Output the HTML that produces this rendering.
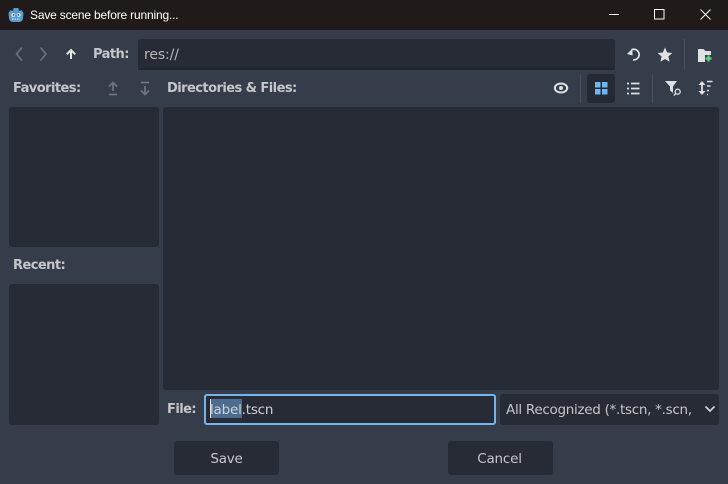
<!DOCTYPE html>
<html><head><meta charset="utf-8">
<style>
html,body{margin:0;padding:0;width:728px;height:484px;overflow:hidden;background:#363d4a}
body{position:relative;font-family:"DejaVu Sans","Liberation Sans",sans-serif;font-size:13px;color:#cdcfd2}
.a{position:absolute}
.p{position:absolute;background:#272b36;border-radius:3px}
.t{position:absolute;white-space:nowrap;line-height:18px;height:18px}
.b{font-weight:bold;color:#c4c6ca;font-size:13px;letter-spacing:-.55px}
svg{position:absolute;overflow:visible}
</style></head><body>
<div class="a" style="left:0;top:0;width:728px;height:30px;background:#201a1b"></div>
<svg style="left:8px;top:7px" width="16" height="16" viewBox="0 0 16 16"><path d="M.5 6 L2.500 3 L5 4 L5.500 1 L10.500 1 L11 4 L13.500 3 L15.500 6 L15 11 Q14.500 15 11 15 L5 15 Q1.500 15 1 11 Z" fill="#5b9bd0"/><circle cx="5.300" cy="8" r="1.900" fill="#e8f0f6"/><circle cx="10.700" cy="8" r="1.900" fill="#e8f0f6"/><circle cx="5.600" cy="8" r=".9" fill="#2c3a48"/><circle cx="10.400" cy="8" r=".9" fill="#2c3a48"/><path d="M4 12h8" stroke="#e8f0f6" stroke-width="1" stroke-dasharray="1.500 1"/></svg>
<div class="t" style="left:30px;top:6px;color:#fff;font-family:'Liberation Sans',sans-serif;font-size:12px;letter-spacing:-.18px">Save scene before running...</div>
<svg style="left:609px;top:9px" width="12" height="12"><path d="M0 5.500h10" stroke="#fff" stroke-width="1"/></svg>
<svg style="left:654px;top:9px" width="12" height="12"><rect x=".5" y=".5" width="9.500" height="9.500" fill="none" stroke="#fff" stroke-width="1"/></svg>
<svg style="left:700px;top:9px" width="12" height="12"><path d="M.5 .5L10.500 10.500M10.500 .5L.5 10.500" stroke="#fff" stroke-width="1"/></svg>

<svg style="left:0;top:0" width="60" height="70"><path d="M22 47.500L16.500 54L22 60.500M40.500 47.500L46 54L40.500 60.500" fill="none" stroke="#6d727b" stroke-width="1.600"/></svg>
<svg style="left:65px;top:48px" width="12" height="12"><path d="M6 11V2.500M1.800 6.300L6 2L10.200 6.300" fill="none" stroke="#e4e5e7" stroke-width="2"/></svg>
<div class="t b" style="left:93px;top:46px">Path:</div>
<div class="p" style="left:138px;top:39px;width:477px;height:31px"></div>
<div class="a" style="left:138px;top:68px;width:477px;height:2px;background:#20252e;border-radius:0 0 3px 3px"></div>
<div class="t" style="left:144px;top:46px;color:#b4b6ba;font-size:14px;letter-spacing:-.1px">res://</div>

<svg style="left:626px;top:47px" width="16" height="15" viewBox="0 0 16 15"><path d="M5.500 2.800A5.300 5.300 0 1 1 7 12.800" fill="none" stroke="#dfe0e2" stroke-width="1.700"/><path d="M1 6.500L6.500 1V8Z" fill="#dfe0e2" transform="translate(0 .5)"/></svg>
<svg style="left:657px;top:47px" width="16" height="16" viewBox="0 0 16 16"><path d="M8 .5L10.200 5.500L15.300 6L11.400 9.500L12.600 14.700L8 12L3.400 14.700L4.600 9.500L.7 6L5.800 5.500Z" fill="#dfe0e2"/></svg>
<div class="a" style="left:684px;top:39px;width:1px;height:31px;background:#4a515d"></div>
<svg style="left:698px;top:49px" width="15" height="13" viewBox="0 0 15 13"><path d="M0 0H5.500L7.500 2H13V13H0Z" fill="#e0e1e3"/><path d="M7 6h8v7h-8z" fill="#363d4a"/><path d="M10.500 6.500v6M7.500 9.500h6" stroke="#5fd47a" stroke-width="2.200"/></svg>

<div class="t b" style="left:13px;top:80px">Favorites:</div>
<svg style="left:107px;top:81px" width="12" height="15"><path d="M6 10V2M2 5.500L6 1.500L10 5.500" fill="none" stroke="#6f7580" stroke-width="1.700"/><path d="M2 13.500h8" stroke="#6f7580" stroke-width="1.700"/></svg>
<svg style="left:139px;top:81px" width="12" height="15"><path d="M2 1.500h8" stroke="#6f7580" stroke-width="1.700"/><path d="M6 5V13M2 9.500L6 13.500L10 9.500" fill="none" stroke="#6f7580" stroke-width="1.700"/></svg>
<div class="t b" style="left:167px;top:80px">Directories &amp; Files:</div>

<svg style="left:553px;top:80px" width="16" height="16" viewBox="0 0 16 16"><ellipse cx="8" cy="8" rx="6.200" ry="4.500" fill="none" stroke="#dfe0e2" stroke-width="2"/><circle cx="8" cy="8" r="2" fill="#dfe0e2"/></svg>
<div class="a" style="left:580px;top:74px;width:1px;height:29px;background:#4a515d"></div>
<div class="a" style="left:587px;top:74px;width:28px;height:29px;background:#232a34;border-radius:3px"></div>
<svg style="left:595px;top:82px" width="13" height="13"><path d="M0 0h5.500v5.500H0zM7 0h5.500v5.500H7zM0 7h5.500v5.500H0zM7 7h5.500v5.500H7z" fill="#6fb5f1"/></svg>
<svg style="left:627px;top:82px" width="13" height="13"><path d="M0 1.500h2M4 1.500h8.500M0 6.500h2M4 6.500h8.500M0 11.500h2M4 11.500h8.500" stroke="#dfe0e2" stroke-width="1.800"/></svg>
<div class="a" style="left:652px;top:74px;width:1px;height:29px;background:#4a515d"></div>
<svg style="left:665px;top:80px" width="17" height="17" viewBox="0 0 17 17"><path d="M0 1H12L8 6.500V13L5 10.500V6.500Z" fill="#dfe0e2"/><circle cx="12.700" cy="11.700" r="2.500" fill="none" stroke="#dfe0e2" stroke-width="1.300"/><path d="M10.700 13.500L8.800 15.500" stroke="#dfe0e2" stroke-width="1.300"/></svg>
<svg style="left:698px;top:80px" width="15" height="16" viewBox="0 0 15 16"><path d="M4 3V13" stroke="#dfe0e2" stroke-width="1.800"/><path d="M.5 5L4 1L7.500 5ZM.5 11L4 15L7.500 11Z" fill="#dfe0e2"/><path d="M9 1.500h5.500M9 6h3.500M9 10.500h2M9 14.500h1" stroke="#dfe0e2" stroke-width="1.500"/></svg>

<div class="p" style="left:9px;top:107px;width:150px;height:140px"></div>
<div class="t b" style="left:13px;top:257px">Recent:</div>
<div class="p" style="left:9px;top:284px;width:150px;height:141px"></div>
<div class="p" style="left:163px;top:107px;width:556px;height:283px"></div>

<div class="t b" style="left:167px;top:401px">File:</div>
<div class="a" style="left:204px;top:394px;width:288px;height:27px;background:#272b36;border:2px solid #77b4ec;border-radius:3px"></div>
<div class="a" style="left:210px;top:399px;width:32px;height:19px;background:#4c6d8f"></div>
<div class="a" style="left:210px;top:399px;width:1px;height:19px;background:#e0e0e0"></div>
<div class="t" style="left:210px;top:401px;color:#cfd1d4;font-size:13.500px;letter-spacing:-.2px">label.tscn</div>
<div class="p" style="left:500px;top:394px;width:219px;height:31px"></div>
<div class="t" style="left:506px;top:401px;width:190px;overflow:hidden;color:#c4c6ca;font-size:13.500px;letter-spacing:-.29px">All Recognized (*.tscn, *.scn,</div>
<svg style="left:704px;top:404px" width="12" height="10"><path d="M1.500 2.500L6 7L10.500 2.500" fill="none" stroke="#d2d4d7" stroke-width="1.700"/></svg>

<div class="p" style="left:174px;top:441px;width:105px;height:34px"></div>
<div class="t" style="left:174px;top:450px;width:105px;text-align:center;color:#c4c6ca;font-size:13.500px;letter-spacing:-.2px">Save</div>
<div class="p" style="left:448px;top:441px;width:105px;height:34px"></div>
<div class="t" style="left:448px;top:450px;width:103px;text-align:center;color:#c4c6ca;font-size:13.500px;letter-spacing:-.2px">Cancel</div>
</body></html>
